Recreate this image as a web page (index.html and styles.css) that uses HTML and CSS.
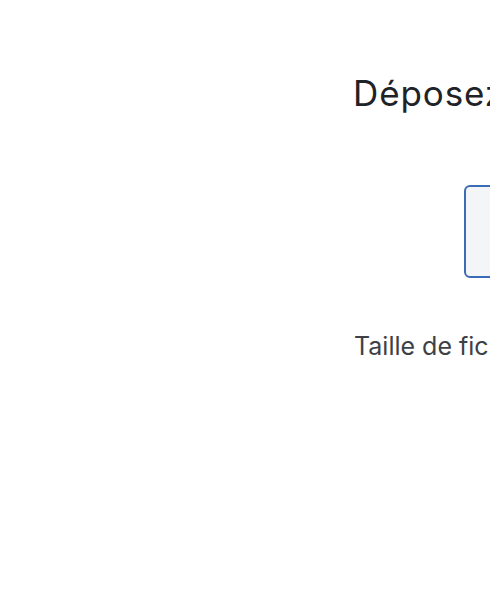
FILE: index.html
```html
<!DOCTYPE html>
<html lang="fr">
<head>
    <meta charset="UTF-8">
    <meta name="viewport" content="width=device-width, initial-scale=1.0">
    <title>Déposez vos fichiers</title>
    <link rel="stylesheet" href="styles.css">
</head>
<body>
    <div class="page">
        <div class="upload">
            <h1 class="upload-title">Déposez vos fichiers ici</h1>

            <div class="dropzone">
                <span class="dropzone-label">Glissez-déposez ou cliquez pour parcourir</span>
            </div>

            <p class="upload-hint">Taille de fichier maximale : 10 Mo</p>
        </div>
    </div>
</body>
</html>
```

FILE: styles.css
```css
* {
    margin: 0;
    padding: 0;
    box-sizing: border-box;
}

html, body {
    overflow: hidden;
}

body {
    font-family: Inter, 'Liberation Sans', sans-serif;
    background: #ffffff;
    color: #212529;
}

.page {
    width: 100%;
    overflow: hidden;
}

.upload {
    width: 900px;
    padding: 71px 0 0 353px;
    white-space: nowrap;
}

.upload-title {
    font-size: 35px;
    font-weight: 400;
    letter-spacing: 0.9px;
    line-height: 44px;
    color: #1f2327;
}

.dropzone {
    margin: 70px 0 0 111px;
    width: 420px;
    height: 93px;
    border: 2px solid #3a6db5;
    border-radius: 6px;
    background: #f4f5f6;
    display: flex;
    align-items: center;
    padding-left: 40px;
}

.dropzone-label {
    font-size: 18px;
    color: #495057;
}

.upload-hint {
    margin-top: 52px;
    padding-left: 1px;
    font-size: 25px;
    line-height: 32px;
    color: #3d4146;
}
```
